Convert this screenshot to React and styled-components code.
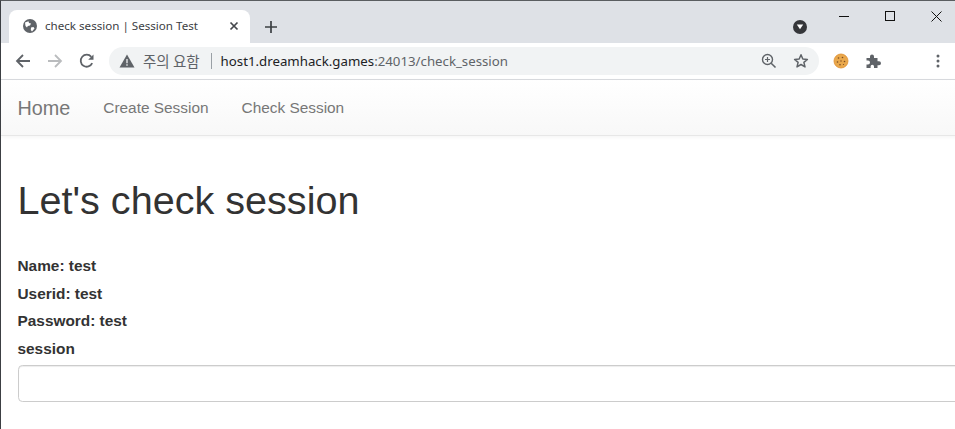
import React from "react";
import styled, { createGlobalStyle } from "styled-components";

const Global = createGlobalStyle`
  html, body { margin: 0; padding: 0; background: #fff; overflow: hidden; }
  body { width: 955px; height: 429px; }
  * { box-sizing: border-box; }
`;

const Win = styled.div`
  width: 955px; height: 429px; overflow: hidden;
  border-left: 1px solid #3c3f43; border-top: 1px solid #5a5d60;
  display: flex; flex-direction: column; background: #fff;
`;
const TabStrip = styled.div`
  height: 42px; flex: none; background: #dee1e6; display: flex; align-items: flex-end;
  padding-left: 8px; position: relative;
`;
const Tab = styled.div`
  width: 241px; height: 33px; background: #fff; border-radius: 8px 8px 0 0;
  display: flex; align-items: center; padding: 0 10px 2px 13px; gap: 7px;
`;
const TabTitle = styled.span`
  flex: 1; font: 11.6px "Noto Sans", sans-serif; color: #3c4043; white-space: nowrap;
`;
const NewTab = styled.div`
  width: 28px; height: 28px; margin: 0 0 2px 7px; display: flex; align-items: center; justify-content: center;
`;
const Spacer = styled.div`flex: 1;`;
const Badge = styled.div`
  width: 14px; height: 14px; border-radius: 50%; background: #35363a; margin: 0 148px 9px 0;
  display: flex; align-items: center; justify-content: center;
`;
const WinControls = styled.div`
  position: absolute; top: 0; right: -4px; display: flex; align-items: center; height: 30px;
`;
const WinBtn = styled.div`
  width: 46px; height: 30px; display: flex; align-items: center; justify-content: center;
`;
const Toolbar = styled.div`
  height: 37px; flex: none; background: #fff; border-bottom: 1px solid #dadce0;
  display: flex; align-items: center; padding: 0 0 1px 0;
`;
const NavBtn = styled.div`
  width: 32px; height: 28px; display: flex; align-items: center; justify-content: center; flex: none;
`;
const Omni = styled.div`
  width: 710px; height: 28px; border-radius: 14px; background: #f1f3f4; margin-left: 6px;
  display: flex; align-items: center; padding: 0 2px 0 10px; flex: none;
`;
const Warn = styled.span`
  margin-left: 8px; font: 14.5px "Noto Sans CJK KR", sans-serif; color: #5f6368; white-space: nowrap;
`;
const Sep = styled.span`
  width: 1px; height: 16px; background: #9aa0a6; margin: 0 9px 0 11px; flex: none;
`;
const Url = styled.span`
  font: 13.25px "Noto Sans", sans-serif; color: #202124; white-space: nowrap; flex: 1;
`;
const UrlPath = styled.span`color: #5f6368;`;
const OmniIcon = styled.div`
  width: 32px; height: 28px; display: flex; align-items: center; justify-content: center; flex: none;
`;
const Ext = styled.div`
  width: 32px; height: 28px; display: flex; align-items: center; justify-content: center; flex: none;
`;
const Viewport = styled.div`
  flex: 1; width: 1200px; font-family: "Liberation Sans", Arial, sans-serif; color: #333;
`;
const Navbar = styled.nav`
  height: 56px; display: flex; align-items: center; padding: 0 16.5px;
  background: linear-gradient(to bottom, #ffffff 0%, #f8f8f8 100%);
  border-bottom: 1px solid #e7e7e7; box-shadow: 0 1px 4px rgba(0,0,0,0.05);
`;
const Brand = styled.a`font-size: 19.8px; color: #777; margin: 2px 33px 0 0;`;
const NavLink = styled.a`font-size: 15.4px; color: #777; margin-right: 33px;`;
const Content = styled.main`padding: 0 16.5px;`;
const Title = styled.h1`
  font-size: 39.6px; font-weight: 400; line-height: 1.1; margin: 43px 0 0; color: #333;
`;
const Info = styled.div`
  margin-top: 32.7px; display: flex; flex-direction: column;
`;
const Label = styled.label`
  font-size: 15.4px; font-weight: 700; line-height: 22px; margin-bottom: 5.5px; display: block; color: #333;
`;
const Input = styled.input`
  display: block; width: 100%; height: 37.4px; border: 1px solid #ccc; border-radius: 4.4px;
  background: #fff; box-shadow: inset 0 1px 1px rgba(0,0,0,.075); outline: none; padding: 0; margin-top: -0.4px;
`;

const I = ({ children, s = 16, v = 16 }) => (
  <svg width={s} height={s} viewBox={`0 0 ${v} ${v}`} fill="none">{children}</svg>
);

export default function App() {
  return (
    <Win>
      <Global />
      <TabStrip>
        <Tab>
          <I>
            <circle cx="8" cy="8" r="7" fill="#5f6368" />
            <path d="M3 4.500 6.500 3.200 7 5 9 5.500 8 7.500 5.800 8 5 9.500 3.500 8ZM9 9.500 11.500 9 12.500 10.500 10 13.500 8.800 12Z" fill="#fff" />
          </I>
          <TabTitle>check session | Session Test</TabTitle>
          <I s={12} v={12}><path d="M2.500 2.500l7 7M9.500 2.500l-7 7" stroke="#45484c" strokeWidth="1.700" /></I>
        </Tab>
        <NewTab>
          <I s={14} v={14}><path d="M7 1v12M1 7h12" stroke="#3c4043" strokeWidth="1.700" /></I>
        </NewTab>
        <Spacer />
        <Badge>
          <I s={8} v={8}><path d="M.8 1.500h6.400L4 6.200Z" fill="#fff" /></I>
        </Badge>
        <WinControls>
          <WinBtn><I s={10} v={10}><path d="M0 5.500h10" stroke="#111" strokeWidth="1" /></I></WinBtn>
          <WinBtn><I s={10} v={10}><rect x=".5" y=".5" width="9" height="9" stroke="#111" /></I></WinBtn>
          <WinBtn><I s={11} v={11}><path d="M.5.5l10 10M10.500.5l-10 10" stroke="#111" strokeWidth="1" /></I></WinBtn>
        </WinControls>
      </TabStrip>
      <Toolbar>
        <NavBtn style={{ marginLeft: 6 }}>
          <I><path d="M15 8H2M8 2 2 8l6 6" stroke="#5f6368" strokeWidth="1.800" /></I>
        </NavBtn>
        <NavBtn>
          <I><path d="M1 8h13M8 2l6 6-6 6" stroke="#babcbe" strokeWidth="1.800" /></I>
        </NavBtn>
        <NavBtn>
          <I>
            <path d="M13.200 10.200A6 6 0 1 1 12.300 3.800" stroke="#5f6368" strokeWidth="1.800" />
            <path d="M14.500 1.500v5.300H9.200Z" fill="#5f6368" />
          </I>
        </NavBtn>
        <Omni>
          <I><path d="M8 1.500 15.500 14.500H.5Z" fill="#5f6368" /><path d="M8 6v4.300M8 11.300v1.400" stroke="#f1f3f4" strokeWidth="1.300" /></I>
          <Warn>주의 요함</Warn>
          <Sep />
          <Url>host1.dreamhack.games<UrlPath>:24013/check_session</UrlPath></Url>
          <OmniIcon>
            <I>
              <circle cx="6.500" cy="6.500" r="5" stroke="#5f6368" strokeWidth="1.400" />
              <path d="M10.200 10.200 14.500 14.500" stroke="#5f6368" strokeWidth="1.600" />
              <path d="M4 6.500h5M6.500 4v5" stroke="#5f6368" strokeWidth="1.200" />
            </I>
          </OmniIcon>
          <OmniIcon>
            <I><path d="M8 1.800 9.800 6l4.600.4-3.500 3 1.100 4.500L8 11.500l-4 2.400 1.100-4.500-3.500-3L6.200 6Z" stroke="#5f6368" strokeWidth="1.500" strokeLinejoin="round" /></I>
          </OmniIcon>
        </Omni>
        <Ext style={{ marginLeft: 6 }}>
          <I>
            <circle cx="8" cy="8" r="7" fill="#e9a84c" />
            <circle cx="8" cy="8" r="7" fill="none" stroke="#e08e2e" strokeWidth=".8" />
            <g fill="#7a4a22">
              <circle cx="5.500" cy="5" r=".8" /><circle cx="9.500" cy="4.500" r=".8" /><circle cx="4.500" cy="9" r=".8" />
              <circle cx="8" cy="8" r=".7" /><circle cx="11.500" cy="8.500" r=".8" /><circle cx="7" cy="11.800" r=".8" /><circle cx="10.500" cy="11.500" r=".6" />
            </g>
          </I>
        </Ext>
        <Ext>
          <I>
            <path d="M1.500 5H5V3.500a2 2 0 0 1 4 0V5h3.500v3.300H14a2 2 0 0 1 0 4h-1.500V15H9v-1.500a1.700 1.700 0 0 0-3.400 0V15H1.500v-3.500H3a2 2 0 0 0 0-4H1.500Z" fill="#5f6368" />
          </I>
        </Ext>
        <Spacer />
        <Ext style={{ marginRight: 1 }}>
          <I>
            <circle cx="8" cy="3" r="1.500" fill="#5f6368" /><circle cx="8" cy="8" r="1.500" fill="#5f6368" /><circle cx="8" cy="13" r="1.500" fill="#5f6368" />
          </I>
        </Ext>
      </Toolbar>
      <Viewport>
        <Navbar>
          <Brand>Home</Brand>
          <NavLink>Create Session</NavLink>
          <NavLink>Check Session</NavLink>
        </Navbar>
        <Content>
          <Title>Let's check session</Title>
          <Info>
            <Label>Name: test</Label>
            <Label>Userid: test</Label>
            <Label>Password: test</Label>
            <Label>session</Label>
            <Input readOnly />
          </Info>
        </Content>
      </Viewport>
    </Win>
  );
}
